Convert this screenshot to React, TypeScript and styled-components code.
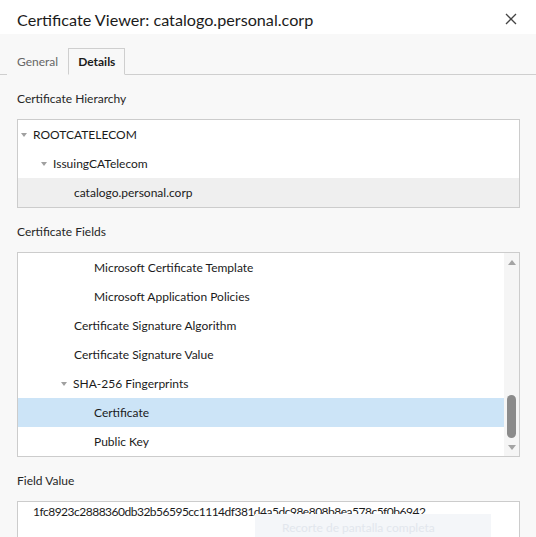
import React from 'react';
import styled, { createGlobalStyle } from 'styled-components';

const GlobalStyle = createGlobalStyle`
  html, body {
    margin: 0;
    padding: 0;
    background: #f8f8f8;
  }
  body {
    font-family: Lato, "Open Sans", sans-serif;
    color: #1b1b1b;
  }
`;

const Dialog = styled.div`
  position: relative;
  width: 536px;
  height: 537px;
  overflow: hidden;
  background: #f8f8f8;
`;

const TitleBar = styled.div`
  display: flex;
  align-items: center;
  justify-content: space-between;
  height: 34px;
  padding: 4px 17px 0 17px;
  box-sizing: border-box;
  background: #ffffff;
`;

const Title = styled.h1`
  margin: 0;
  font-size: 16.2px;
  font-weight: 400;
  color: #1b1b1b;
`;

const CloseButton = styled.button`
  border: none;
  background: transparent;
  padding: 0;
  width: 16px;
  height: 16px;
  display: flex;
  align-items: center;
  justify-content: center;
  cursor: pointer;
`;

const TabBar = styled.div`
  display: flex;
  align-items: flex-end;
  height: 41px;
  padding-left: 7px;
  box-sizing: border-box;
  border-bottom: 1px solid #cfcfcf;
`;

const Tab = styled.div<{ active?: boolean }>`
  height: 25px;
  display: flex;
  align-items: center;
  padding: 0 9px;
  margin-bottom: -1px;
  font-size: 12px;
  font-weight: ${({ active }) => (active ? 700 : 400)};
  color: ${({ active }) => (active ? '#1b1b1b' : '#666666')};
  background: #f8f8f8;
  border: 1px solid ${({ active }) => (active ? '#cfcfcf' : 'transparent')};
  border-bottom-color: ${({ active }) => (active ? '#f8f8f8' : 'transparent')};
`;

const Content = styled.div`
  padding: 15px 16px 0 17px;
  display: flex;
  flex-direction: column;
`;

const Label = styled.div<{ gap: number }>`
  height: 18px;
  line-height: 18px;
  font-size: 12px;
  color: #262626;
  margin-top: ${({ gap }) => gap}px;
  margin-bottom: 11px;
`;

const TreeBox = styled.div`
  border: 1px solid #cccccc;
  background: #ffffff;
`;

const FieldsBox = styled.div`
  display: flex;
  border: 1px solid #cccccc;
  background: #ffffff;
  height: 203px;
`;

const RowList = styled.div`
  flex: 1;
  display: flex;
  flex-direction: column;
`;

const Row = styled.div<{ level: number; selected?: boolean; current?: boolean }>`
  height: 29px;
  display: flex;
  align-items: center;
  padding-left: ${({ level }) => 16 + level * 20}px;
  font-size: 12px;
  color: #1b1b1b;
  background: ${({ selected, current }) =>
    selected ? '#cce4f7' : current ? '#efefef' : 'transparent'};
`;

const Arrow = styled.span`
  width: 0;
  height: 0;
  border-left: 3.5px solid transparent;
  border-right: 3.5px solid transparent;
  border-top: 4px solid #a0a0a0;
  margin-left: -13px;
  margin-right: 6px;
`;

const Scrollbar = styled.div`
  width: 15px;
  background: #f5f5f5;
  display: flex;
  flex-direction: column;
  align-items: center;
  justify-content: space-between;
  padding: 7px 0 6px;
  box-sizing: border-box;
`;

const ScrollArrow = styled.span<{ up?: boolean }>`
  width: 0;
  height: 0;
  border-left: 4px solid transparent;
  border-right: 4px solid transparent;
  ${({ up }) =>
    up ? 'border-bottom: 5px solid #a3a3a3;' : 'border-top: 5px solid #a3a3a3;'}
`;

const Track = styled.div`
  flex: 1;
  width: 100%;
  display: flex;
  flex-direction: column;
  justify-content: flex-end;
  align-items: center;
  padding-bottom: 7px;
`;

const Thumb = styled.div`
  width: 9px;
  height: 43px;
  border-radius: 5px;
  background: #8b8b8b;
`;

const ValueBox = styled.div`
  border: 1px solid #cccccc;
  border-bottom: none;
  background: #ffffff;
  height: 60px;
  padding: 0 15px;
  font-size: 12px;
  line-height: 20px;
  letter-spacing: -0.5px;
  color: #1b1b1b;
`;

const Toast = styled.div`
  position: absolute;
  left: 255px;
  top: 514px;
  width: 236px;
  height: 30px;
  background: #f4f6f9;
  color: #e2e6ed;
  font-size: 12px;
  padding: 6px 0 0 27px;
  box-sizing: border-box;
`;

type Item = { text: string; level: number; expanded?: boolean; selected?: boolean; current?: boolean };

const hierarchy: Item[] = [
  { text: 'ROOTCATELECOM', level: 0, expanded: true },
  { text: 'IssuingCATelecom', level: 1, expanded: true },
  { text: 'catalogo.personal.corp', level: 2, current: true },
];

const fields: Item[] = [
  { text: 'Microsoft Certificate Template', level: 3 },
  { text: 'Microsoft Application Policies', level: 3 },
  { text: 'Certificate Signature Algorithm', level: 2 },
  { text: 'Certificate Signature Value', level: 2 },
  { text: 'SHA-256 Fingerprints', level: 2, expanded: true },
  { text: 'Certificate', level: 3, selected: true },
  { text: 'Public Key', level: 3 },
];

const renderRow = (item: Item) => (
  <Row key={item.text} level={item.level} selected={item.selected} current={item.current}>
    {item.expanded && <Arrow />}
    {item.text}
  </Row>
);

const App = () => {
  return (
    <Dialog>
      <GlobalStyle />
      <TitleBar>
        <Title>Certificate Viewer: catalogo.personal.corp</Title>
        <CloseButton aria-label="Close">
          <svg width="12" height="12" viewBox="0 0 12 12">
            <path d="M1 1 L11 11 M11 1 L1 11" stroke="#444" strokeWidth="1.3" />
          </svg>
        </CloseButton>
      </TitleBar>
      <TabBar>
        <Tab>General</Tab>
        <Tab active>Details</Tab>
      </TabBar>
      <Content>
        <Label gap={0}>Certificate Hierarchy</Label>
        <TreeBox>{hierarchy.map(renderRow)}</TreeBox>
        <Label gap={15}>Certificate Fields</Label>
        <FieldsBox>
          <RowList>{fields.map(renderRow)}</RowList>
          <Scrollbar>
            <ScrollArrow up />
            <Track>
              <Thumb />
            </Track>
            <ScrollArrow />
          </Scrollbar>
        </FieldsBox>
        <Label gap={15}>Field Value</Label>
        <ValueBox>1fc8923c2888360db32b56595cc1114df381d4a5dc98e808b8ea578c5f0b6942</ValueBox>
      </Content>
      <Toast>Recorte de pantalla completa</Toast>
    </Dialog>
  );
};

export default App;
